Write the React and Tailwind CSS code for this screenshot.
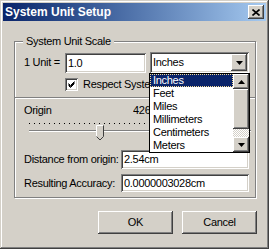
import React from 'react';

const raised =
  'shadow-[inset_-1px_-1px_#404040,inset_1px_1px_#ffffff,inset_-2px_-2px_#808080,inset_2px_2px_#d4d0c8]';
const sunken =
  'shadow-[inset_1px_1px_#808080,inset_-1px_-1px_#ffffff,inset_2px_2px_#404040,inset_-2px_-2px_#d4d0c8]';

const DownArrow = () => (
  <svg width="7" height="4" viewBox="0 0 7 4">
    <polygon points="0,0 7,0 3.5,4" fill="#000" />
  </svg>
);

const UpArrow = () => (
  <svg width="7" height="4" viewBox="0 0 7 4">
    <polygon points="0,4 7,4 3.5,0" fill="#000" />
  </svg>
);

const units = ['Inches', 'Feet', 'Miles', 'Millimeters', 'Centimeters', 'Meters'];

const Field = ({ value, className }) => (
  <div className={`bg-white ${sunken} flex items-center pl-[3px] ${className}`}>
    <span className="whitespace-nowrap">{value}</span>
  </div>
);

const UnitList = () => (
  <div className="absolute left-[-1px] top-[21px] w-[101px] h-[80px] border border-black bg-white flex z-10">
    <div className="flex-1 flex flex-col">
      {units.map((u, i) => (
        <div
          key={u}
          className={
            i === 0
              ? 'h-[13px] leading-[11px] pl-[2px] bg-[#0a246a] text-white border border-dotted border-[#f5db95]'
              : 'h-[13px] leading-[13px] pl-[3px]'
          }
        >
          {u}
        </div>
      ))}
    </div>
    {/* scrollbar */}
    <div className="w-[16px] flex flex-col">
      <div className={`h-[15px] bg-[#d4d0c8] ${raised} flex items-center justify-center`}>
        <UpArrow />
      </div>
      <div className={`h-[40px] bg-[#d4d0c8] ${raised}`} />
      <div className="h-[8px] bg-[repeating-conic-gradient(#ffffff_0%_25%,#d4d0c8_0%_50%)] bg-[length:2px_2px]" />
      <div className={`h-[15px] bg-[#d4d0c8] ${raised} flex items-center justify-center`}>
        <DownArrow />
      </div>
    </div>
  </div>
);

export default function App() {
  return (
    <div
      className={`w-[269px] h-[249px] bg-[#d4d0c8] p-[3px] flex flex-col text-[11px] leading-[13px] tracking-[-0.3px] text-black shadow-[inset_-1px_-1px_#404040,inset_1px_1px_#d4d0c8,inset_-2px_-2px_#808080,inset_2px_2px_#ffffff]`}
      style={{ fontFamily: '"Liberation Sans", Arial, sans-serif' }}
    >
      {/* title bar */}
      <div className="h-[18px] shrink-0 flex items-center justify-between pl-[2px] pr-[2px] bg-gradient-to-r from-[#0a246a] to-[#a6caf0]">
        <span className="text-white font-bold text-[12px] leading-[14px] tracking-normal">System Unit Setup</span>
        <div className={`w-[16px] h-[14px] bg-[#d4d0c8] ${raised} flex items-center justify-center`}>
          <svg width="8" height="7" viewBox="0 0 8 7">
            <path d="M0.5 0.5 L7.5 6.5 M7.5 0.5 L0.5 6.5" stroke="#000" strokeWidth="1.6" />
          </svg>
        </div>
      </div>

      <fieldset className="shrink-0 mt-[13px] ml-[11px] w-[242px] h-[164px] border border-[#808080] shadow-[inset_1px_1px_#ffffff,1px_1px_#ffffff] p-0 m-0 min-w-0">
        <legend className="ml-[8px] px-[3px] leading-[14px] bg-[#d4d0c8]">System Unit Scale</legend>

        <div className="flex items-start mt-[4px] ml-[9px]">
          <span className="w-[41px] mt-[4px] whitespace-nowrap">1 Unit =</span>
          <Field value="1.0" className="w-[81px] h-[20px] mt-[1px]" />
          <div className={`relative ml-[4px] w-[99px] h-[21px] bg-white ${sunken} flex items-center pl-[3px] pr-[2px]`}>
            <span className="flex-1">Inches</span>
            <div className={`w-[16px] h-[17px] bg-[#d4d0c8] ${raised} flex items-center justify-center`}>
              <DownArrow />
            </div>
            <UnitList />
          </div>
        </div>

        <div className="flex items-center mt-[5px] ml-[50px]">
          <div className={`w-[13px] h-[13px] bg-white ${sunken} flex items-center justify-center`}>
            <svg width="7" height="7" viewBox="0 0 7 7">
              <path d="M0.5 2.5 L2.5 4.5 L6.5 0.5 M0.5 3.5 L2.5 5.5 L6.5 1.5 M0.5 4.5 L2.5 6.5 L6.5 2.5" stroke="#000" strokeWidth="1" fill="none" />
            </svg>
          </div>
          {/* the open list covers the rest of this label */}
          <span className="ml-[5px] w-[66px] overflow-hidden whitespace-nowrap">Respect System Units</span>
        </div>

        <div className="mt-[6px] h-[2px] border-t border-[#808080] border-b border-b-white" />

        <div className="flex mt-[5px] ml-[9px]">
          <span className="w-[109px]">Origin</span>
          <span className="w-[16px] overflow-hidden whitespace-nowrap">4261.0</span>
        </div>

        <div className="relative mt-[4px] ml-[14px] h-[19px] w-[222px]">
          <div className="mt-[6px] h-[1px] bg-[repeating-linear-gradient(to_right,#000_0px,#000_1px,transparent_1px,transparent_5px)]" />
          <div className="mt-[6px] h-[2px] border-t border-[#808080] border-b border-b-white" />
          <svg className="absolute left-[67px] top-[2px]" width="8" height="16" viewBox="0 0 8 16">
            <polygon points="0.5,0.5 7.5,0.5 7.5,11.5 4,15 0.5,11.5" fill="#d4d0c8" />
            <polyline points="0.5,12 0.5,0.5 7,0.5" stroke="#fff" fill="none" />
            <polyline points="7.5,0.5 7.5,11.5 4,15 0.5,11.5" stroke="#404040" fill="none" />
          </svg>
        </div>

        <div className="flex items-center mt-[8px] ml-[9px]">
          <span className="w-[97px] whitespace-nowrap">Distance from origin:</span>
          <Field value="2.54cm" className="w-[128px] h-[19px]" />
        </div>

        <div className="flex items-center mt-[5px] ml-[9px]">
          <span className="w-[97px] whitespace-nowrap">Resulting Accuracy:</span>
          <Field value="0.0000003028cm" className="w-[128px] h-[18px]" />
        </div>
      </fieldset>

      <div className="flex justify-end gap-[9px] mt-[13px] mr-[9px]">
        <div className={`w-[75px] h-[23px] bg-[#d4d0c8] ${raised} flex items-center justify-center`}>OK</div>
        <div className={`w-[75px] h-[23px] bg-[#d4d0c8] ${raised} flex items-center justify-center`}>Cancel</div>
      </div>
    </div>
  );
}
